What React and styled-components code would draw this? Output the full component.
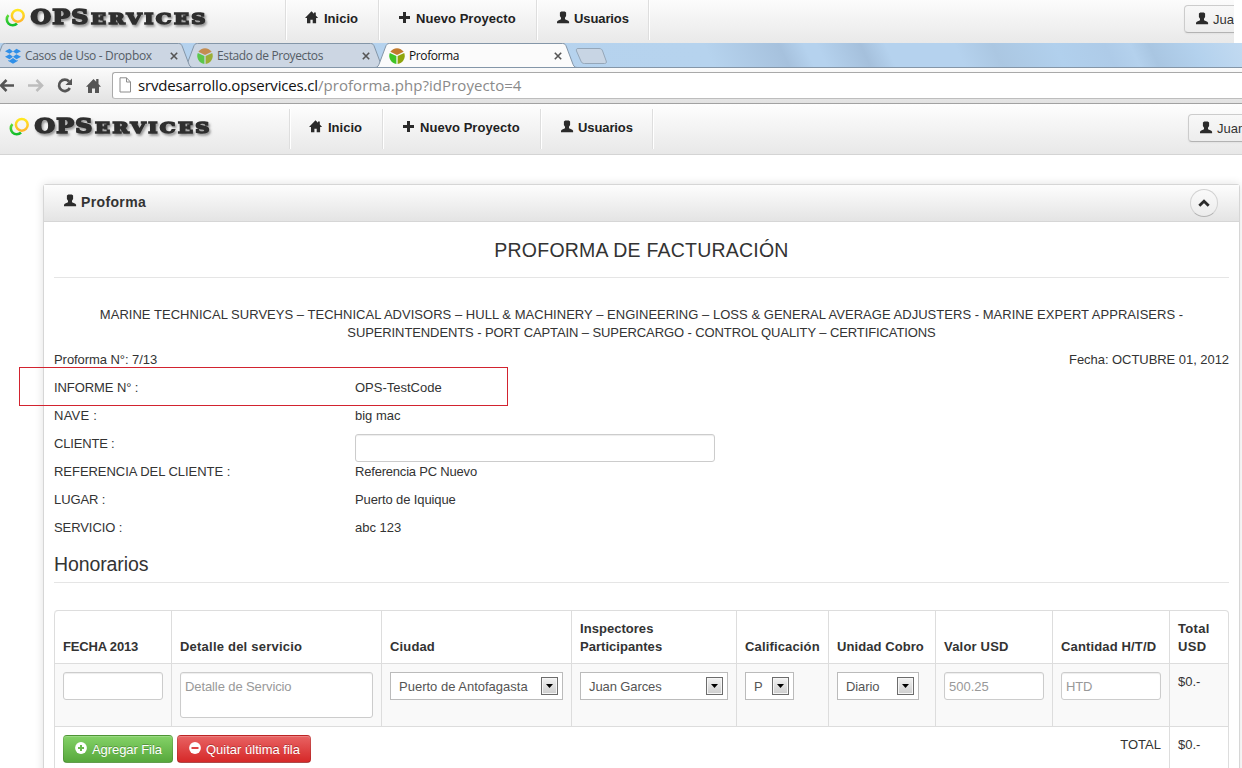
import React from "react";
import styled, { createGlobalStyle, css } from "styled-components";

const GlobalStyle = createGlobalStyle`
  * { box-sizing: border-box; }
  html, body { margin: 0; padding: 0; }
  body {
    width: 1242px;
    height: 768px;
    overflow: hidden;
    background: #fff;
    color: #333;
    font: 13px/18px "Liberation Sans", Arial, sans-serif;
  }
`;

const Page = styled.div`
  width: 1242px;
  height: 768px;
  overflow: hidden;
  display: flex;
  flex-direction: column;
`;

const T = styled.span`
  white-space: nowrap;
  letter-spacing: ${(p) => p.$ls || 0}px;
`;

/* ---------- site navigation bar ---------- */

const CroppedBar = styled.div`
  height: 43px;
  width: 1234px;
  overflow: hidden;
  flex: none;
`;

const Bar = styled.header`
  display: flex;
  align-items: flex-start;
  flex: none;
  width: ${(p) => p.$w}px;
  height: 51px;
  overflow: hidden;
  padding-left: ${(p) => p.$left}px;
  margin-top: ${(p) => p.$top || 0}px;
  background: linear-gradient(#fefefe, #e8e8e8);
  border-bottom: 1px solid #d4d4d4;
`;

const Logo = styled.svg`
  flex: none;
  margin-top: 5px;
  width: 281px;
  height: 40px;
`;

const Nav = styled.nav`
  display: flex;
  height: 40px;
  margin-top: 5px;
  flex: 1;
`;

const NavItem = styled.a`
  display: flex;
  gap: ${(p) => p.$gap || 4}px;
  width: ${(p) => p.$w}px;
  padding: 10px 0 0 19px;
  border-left: 1px solid #dedede;
  box-shadow: inset 1px 0 0 #fff;
  font-weight: bold;
  color: #222;
`;

const UserButton = styled.button`
  display: flex;
  gap: 4px;
  flex: none;
  width: 90px;
  height: 28px;
  margin: 10px -36px 0 0;
  padding: 5px 0 0 10px;
  border: 1px solid #ccc;
  border-bottom-color: #b3b3b3;
  border-radius: 4px;
  background: linear-gradient(#f8f8f8, #ededed);
  box-shadow: 0 1px 2px rgba(0, 0, 0, 0.05);
  color: #333;
  font: 13px/18px "Liberation Sans", Arial, sans-serif;
`;

const Glyph = styled.svg.attrs({ width: 14, height: 14, viewBox: "0 0 14 14" })`
  flex: none;
  margin-top: 1px;
  fill: #2b2b2b;
`;
const HomeIcon = () => (
  <Glyph>
    <path d="M6.500 .3 0 6.900h2V12.300h3.400V8.700h2.300v3.600h3.400V6.900h2L10.800 4.500V1.500H9v1.200z" />
  </Glyph>
);
const PlusIcon = () => (
  <Glyph>
    <path d="M5 1h3v4h4V8H8v4H5V8H1V5h4z" />
  </Glyph>
);
const UserIcon = () => (
  <Glyph>
    <path d="M5.200.4h3.600l1.300 1v3.600L9 6.800v1.500l3.300 1.400.8 1v1.600H1v-1.600l.8-1 3.200-1.400V6.800L3.900 5V1.400z" />
  </Glyph>
);

const Brand = () => (
  <Logo viewBox="0 0 281 40">
    <defs>
      <linearGradient id="ringY" x1="0" y1="0" x2="0" y2="1">
        <stop offset="0" stopColor="#ffe81f" />
        <stop offset="1" stopColor="#ffb62a" />
      </linearGradient>
      <linearGradient id="ringG" x1="0" y1="0" x2="0" y2="1">
        <stop offset="0" stopColor="#5fdc3a" />
        <stop offset="1" stopColor="#14bd2c" />
      </linearGradient>
      <filter id="sh" x="-5%" y="-30%" width="112%" height="180%">
        <feDropShadow dx="1.5" dy="2" stdDeviation="1.3" floodColor="#555" floodOpacity=".6" />
      </filter>
    </defs>
    <path d="M4.500 15.200A5.800 5.800 0 1 0 13 23.500" fill="none" stroke="url(#ringG)" strokeWidth="2.600" />
    <circle cx="13.800" cy="15.800" r="5.900" fill="none" stroke="url(#ringY)" strokeWidth="2.500" />
    <g
      filter="url(#sh)"
      fill="#2e2e2e"
      stroke="#2e2e2e"
      strokeWidth="1.600"
      fontFamily="'DejaVu Serif', serif"
      fontWeight="bold"
    >
      <text x="26.500" y="24.300" fontSize="19.500" textLength="59" lengthAdjust="spacingAndGlyphs" letterSpacing="1">OPS</text>
      <text x="87" y="24.300" fontSize="15.500" textLength="117" lengthAdjust="spacingAndGlyphs" letterSpacing="2">ERVICES</text>
    </g>
  </Logo>
);

const SiteBar = ({ left, top, width }) => (
  <Bar $left={left} $top={top} $w={width}>
    <Brand />
    <Nav>
      <NavItem $w={93} $gap={5}><HomeIcon /><T>Inicio</T></NavItem>
      <NavItem $w={158}><PlusIcon /><T $ls={0.05}>Nuevo Proyecto</T></NavItem>
      <NavItem $w={112}><UserIcon /><T $ls={-0.1}>Usuarios</T></NavItem>
      <NavItem $w={1} />
    </Nav>
    <UserButton><UserIcon /><T>Juan</T></UserButton>
  </Bar>
);

/* ---------- browser chrome ---------- */

const TabStrip = styled.div`
  display: flex;
  flex: none;
  height: 25px;
  overflow: hidden;
  background: linear-gradient(65deg,
    #b4d1ed 0%, #b6d3ee 57%, #a6c1dd 63%, #b5d2ee 65%,
    #b5d2ee 66%, #a5c0dc 69.5%, #b5d2ee 71.5%, #b5d2ee 77%,
    #abc7e2 80%, #b1d0ed 85%, #aecbe8 89%, #b4d1ed 91%,
    #a9c6e2 92.5%, #b3d1ed 96%, #c2daf1 100%);
  border-bottom: 1px solid #8496a8;
`;

const Tab = styled.div`
  display: grid;
  flex: none;
  width: 202px;
  height: 25px;
  margin-left: ${(p) => (p.$first ? -9 : -10)}px;
  z-index: ${(p) => p.$z};
  > * { grid-area: 1 / 1; }
`;

const TabLabel = styled.div`
  display: flex;
  align-items: center;
  padding: 1px 15px 0 14px;
  gap: 4px;
  font: 12px/16px "Open Sans", "Segoe UI", sans-serif;
  color: ${(p) => (p.$active ? "#111" : "#555d66")};
  svg { flex: none; }
  span { flex: 1; }
`;

const TabShape = ({ active }) => (
  <svg width="202" height="25" viewBox="0 0 202 25">
    <path
      d="M0 24.500C3 24.500 3.500 22.500 4.500 20L10.500 4C11.500 1.500 12 .5 14.500 .5H187.500C190 .5 190.500 1.500 191.500 4L197.500 20C198.500 22.500 199 24.500 202 24.500"
      fill={active ? "#fbfbfb" : "#ccd6e3"}
      stroke="#8496a8"
    />
  </svg>
);

const CloseX = () => (
  <svg width="8" height="8" viewBox="0 0 8 8" stroke="#555" strokeWidth="1.600">
    <path d="M.8.800l6.400 6.400M7.200.800L.8 7.200" />
  </svg>
);
const DropboxIcon = () => (
  <svg width="16" height="16" viewBox="0 0 16 16" fill="#2f8fe8">
    <path d="M4.500.8 8 3.400 4.600 5.800 0 3.200zM11.500.8 16 3.200 11.400 5.800 8 3.400zM4.600 6.200 8 8.700 4.500 11.200 0 8.700zM11.400 6.200 16 8.700l-4.500 2.500L8 8.700zM3.300 12l1.200.5L8 9.900l3.500 2.600 1.200-.5v1L8 15.800 3.300 13z" />
  </svg>
);
const CubeIcon = ({ dim }) => (
  <svg width="16" height="16" viewBox="0 0 16 16" opacity={dim ? 0.8 : 1}>
    <path d="M1.300 3.800A8 8 0 0 1 14.700 3.800L8 7z" fill="#c27a2c" />
    <path d="M.8 5A8 8 0 0 0 7.400 15.900V8.100z" fill="#3fc425" />
    <path d="M15.200 5A8 8 0 0 1 8.600 15.900V8.100z" fill="#8fa50c" />
  </svg>
);

const NewTab = styled.svg`
  margin: 5px 0 0 -2px;
  z-index: 1;
`;

const Toolbar = styled.div`
  display: flex;
  flex: none;
  height: 36px;
  background: linear-gradient(#fbfbfb, #e2e2e2);
  border-bottom: 1px solid #a2a2a2;
`;

const ToolIcons = styled.svg`
  flex: none;
  width: 112px;
  height: 35px;
`;

const Omnibox = styled.div`
  display: flex;
  align-items: center;
  flex: 1;
  height: 27px;
  margin-top: 4px;
  padding: 0 0 1px 6px;
  gap: 6px;
  background: #fff;
  border: 1px solid #a9a9a9;
  border-right: 0;
  border-bottom-color: #bdbdbd;
  border-radius: 3px 0 0 3px;
  color: #8a8a8a;
  font: 15px/20px "Open Sans", "Segoe UI", sans-serif;
`;

const Host = styled.b`
  font-weight: normal;
  letter-spacing: -0.17px;
  color: #111;
`;

/* ---------- proforma panel ---------- */

const Main = styled.main`
  flex: none;
  padding: 29px 2px 0 43px;
`;

const Panel = styled.section`
  height: 640px;
  border: 1px solid #d6d6d6;
  border-radius: 3px;
  background: #fff;
  box-shadow: 0 0 10px rgba(0, 0, 0, 0.12);
`;

const PanelHead = styled.div`
  display: flex;
  justify-content: space-between;
  height: 37px;
  padding: 8px 21px 0 19px;
  background: linear-gradient(#fdfdfd, #e4e4e4);
  border-bottom: 1px solid #d6d6d6;
  font: bold 14px/18px "Liberation Sans", Arial, sans-serif;
`;

const PanelTitle = styled.div`
  display: flex;
  gap: 4px;
`;

const Collapse = styled.button`
  display: grid;
  place-items: center;
  width: 28px;
  height: 28px;
  margin-top: -4px;
  padding: 0 1px 0 0;
  border: 1px solid #d2d2d2;
  border-bottom-color: #b3b3b3;
  border-radius: 50%;
  background: linear-gradient(#fafafa, #ececec);
`;

const Body = styled.div`
  padding: 0 10px;
`;

const Heading = styled.h3`
  margin: 0;
  height: ${(p) => p.$h}px;
  padding-top: ${(p) => p.$pt}px;
  border-bottom: 1px solid #e5e5e5;
  font: normal 19.5px/28px "Liberation Sans", Arial, sans-serif;
  text-align: ${(p) => p.$align || "left"};
`;

const Services = styled.div`
  display: flex;
  flex-direction: column;
  align-items: center;
  margin-top: 28px;
`;

const Meta = styled.div`
  display: flex;
  justify-content: space-between;
  margin: 9px 0 4px;
`;

const Field = styled.div`
  display: grid;
  grid-template-columns: 301px 1fr;
  align-items: start;
  height: 28px;
  padding-top: 6px;
  input { margin-top: -1px; }
`;

/* annotation frame laid over the report-number row */
const Highlight = styled.div`
  position: absolute;
  left: -35px;
  top: -6px;
  width: 489px;
  height: 39px;
  border: 1px solid #d2232f;
`;

const Fields = styled.div`
  position: relative;
`;

const inputLook = css`
  display: block;
  border: 1px solid #ccc;
  border-radius: 3px;
  background: #fff;
  box-shadow: inset 0 1px 1px rgba(0, 0, 0, 0.075);
  padding: 4px;
  font: 13px/18px "Liberation Sans", Arial, sans-serif;
  color: #555;
  letter-spacing: ${(p) => p.$ls || 0}px;
  &::placeholder { color: #999; opacity: 1; }
`;

const Input = styled.input`
  ${inputLook}
  width: ${(p) => p.$w}px;
  height: 28px;
`;

const Area = styled.textarea`
  ${inputLook}
  width: 193px;
  height: 46px;
  padding-top: 5px;
  resize: none;
`;

const Select = styled.div`
  display: flex;
  justify-content: space-between;
  align-items: flex-start;
  width: ${(p) => p.$w}px;
  height: 28px;
  padding: 5px 4px 0 8px;
  border: 1px solid #bbb;
  background: #fff;
  color: #555;
`;

const Arrow = styled.span`
  display: grid;
  place-items: center;
  width: 17px;
  height: 18px;
  margin-top: -1px;
  border: 1px solid #6c6c6c;
  box-shadow: inset 0 0 0 1px #f6f6f6;
  background: linear-gradient(#f2f2f2, #cdcdcd);
`;

const Pick = ({ w, ls, children }) => (
  <Select $w={w}>
    <T $ls={ls}>{children}</T>
    <Arrow>
      <svg width="7" height="4" viewBox="0 0 7 4"><path d="M0 0h7L3.500 4z" /></svg>
    </Arrow>
  </Select>
);

const Table = styled.table`
  width: 1175px;
  margin-top: 27px;
  table-layout: fixed;
  border-collapse: separate;
  border-spacing: 0;
  border: 1px solid #ddd;
  border-left: 0;
  border-radius: 4px;
  th, td {
    padding: 8px;
    border-left: 1px solid #ddd;
    text-align: left;
    vertical-align: top;
  }
  th { vertical-align: bottom; height: 52px; padding-bottom: 7px; }
  td { border-top: 1px solid #ddd; }
  tbody td { background: #f9f9f9; height: 63px; }
  thead th:first-child { border-top-left-radius: 4px; }
`;

const Col = styled.col`
  width: ${(p) => p.$w}px;
`;

const HeadCell = styled.th`
  letter-spacing: ${(p) => p.$ls}px;
`;

const Amount = styled.div`
  padding-top: 1px;
`;

const Total = styled.div`
  display: flex;
  justify-content: space-between;
`;

const Actions = styled.div`
  display: flex;
  gap: 4px;
`;

const Button = styled.button`
  display: flex;
  gap: 4px;
  width: ${(p) => p.$w}px;
  height: 28px;
  padding: 5px 0 0 10px;
  border: 1px solid rgba(0, 0, 0, 0.12);
  border-bottom-color: rgba(0, 0, 0, 0.25);
  border-radius: 4px;
  background: ${(p) => (p.$red ? "linear-gradient(#e86363, #d62828)" : "linear-gradient(#84d267, #57a83c)")};
  box-shadow: inset 0 1px 0 rgba(255, 255, 255, 0.2);
  color: #fff;
  text-shadow: 0 -1px 0 rgba(0, 0, 0, 0.25);
  font: 13px/18px "Liberation Sans", Arial, sans-serif;
  svg { flex: none; }
`;

const SignIcon = ({ plus }) => (
  <svg width="14" height="14" viewBox="0 0 14 14">
    <circle cx="7" cy="7" r="5.900" fill="#fff" />
    <path d={plus ? "M7 4v6M4 7h6" : "M3.500 7h7"} stroke={plus ? "#69b94d" : "#dc4444"} strokeWidth="2" />
  </svg>
);

const columns = [
  [117, "FECHA 2013", -0.18],
  [210, "Detalle del servicio", 0.22],
  [190, "Ciudad", 0.15],
  [165, "Inspectores Participantes", 0.04],
  [92, "Calificación", 0.15],
  [107, "Unidad Cobro", 0.08],
  [117, "Valor USD", 0.2],
  [117, "Cantidad H/T/D", 0.15],
  [59, "Total USD", 0.3],
];

export default function App() {
  return (
    <Page>
      <GlobalStyle />
      <CroppedBar>
        <SiteBar left={4} top={-5} width={1238} />
      </CroppedBar>

      <TabStrip>
        <Tab $first $z={2}>
          <TabShape />
          <TabLabel><DropboxIcon /><T $ls={-0.33}>Casos de Uso - Dropbox</T><CloseX /></TabLabel>
        </Tab>
        <Tab $z={1}>
          <TabShape />
          <TabLabel><CubeIcon dim /><T $ls={-0.38}>Estado de Proyectos</T><CloseX /></TabLabel>
        </Tab>
        <Tab $z={3}>
          <TabShape active />
          <TabLabel $active><CubeIcon /><T $ls={-0.4}>Proforma</T><CloseX /></TabLabel>
        </Tab>
        <NewTab width="34" height="17" viewBox="0 0 34 17">
          <path d="M3 .5h21c2 0 3 .8 3.600 2.500l3.600 10c.5 1.500 0 2.500-1.700 2.500H9.500c-2 0-3-.8-3.600-2.500L1.500 3C1 1.500 1.500.5 3 .5z" fill="#c8d5e4" stroke="#95a7b9" />
        </NewTab>
      </TabStrip>
      <Toolbar>
        <ToolIcons viewBox="0 0 112 35" fill="none">
          <path d="M14 17.500H1M6.500 12 1 17.500 6.500 23" stroke="#555" strokeWidth="2.600" />
          <path d="M28 17.500h14M36.500 12l5.500 5.500-5.500 5.500" stroke="#bdbdbd" strokeWidth="2.600" />
          <path d="M69 13.500A5.700 5.700 0 1 0 69.800 20" stroke="#555" strokeWidth="2.700" />
          <path d="M72 10.500V17h-6.500z" fill="#555" />
          <path d="M93.500 11 86 18.700h2V25h4v-4.500h3V25h4v-6.300h2L98.500 16v-5h-2.300v2.700z" fill="#555" />
        </ToolIcons>
        <Omnibox>
          <svg width="13" height="16" viewBox="0 0 13 16" fill="#fff" stroke="#8c8c8c">
            <path d="M1 .8h6.500L11.500 5v10H1zM7.500.8V5h4" />
          </svg>
          <T $ls={0.06}><Host>srvdesarrollo.opservices.cl</Host>/proforma.php?idProyecto=4</T>
        </Omnibox>
      </Toolbar>

      <SiteBar left={8} width={1242} />

      <Main>
        <Panel>
          <PanelHead>
            <PanelTitle><UserIcon /><T $ls={0.36}>Proforma</T></PanelTitle>
            <Collapse>
              <svg width="12" height="8" viewBox="0 0 12 8" fill="none" stroke="#2b2b2b" strokeWidth="2.800">
                <path d="M1.300 6.800 6 2.200l4.700 4.600" />
              </svg>
            </Collapse>
          </PanelHead>
          <Body>
            <Heading $h={56} $pt={14} $align="center"><T $ls={0.22}>PROFORMA DE FACTURACIÓN</T></Heading>
            <Services>
              <T $ls={0.03}>MARINE TECHNICAL SURVEYS – TECHNICAL ADVISORS – HULL &amp; MACHINERY – ENGINEERING – LOSS &amp; GENERAL AVERAGE ADJUSTERS - MARINE EXPERT APPRAISERS -</T>
              <T $ls={-0.1}>SUPERINTENDENTS - PORT CAPTAIN – SUPERCARGO - CONTROL QUALITY – CERTIFICATIONS</T>
            </Services>
            <Meta>
              <T $ls={-0.06}>Proforma N°: 7/13</T>
              <T $ls={-0.05}>Fecha: OCTUBRE 01, 2012</T>
            </Meta>
            <Fields>
              <Field><T $ls={-0.08}>INFORME N° :</T><T>OPS-TestCode</T></Field>
              <Field><T $ls={0.25}>NAVE :</T><T>big mac</T></Field>
              <Field><T $ls={-0.18}>CLIENTE :</T><Input $w={360} /></Field>
              <Field><T $ls={-0.04}>REFERENCIA DEL CLIENTE :</T><T $ls={-0.2}>Referencia PC Nuevo</T></Field>
              <Field><T $ls={-0.1}>LUGAR :</T><T $ls={-0.12}>Puerto de Iquique</T></Field>
              <Field><T $ls={-0.08}>SERVICIO :</T><T>abc 123</T></Field>
              <Highlight />
            </Fields>
            <Heading $h={42} $pt={9}><T $ls={-0.1}>Honorarios</T></Heading>
            <Table>
              <colgroup>
                {columns.map(([w, label]) => <Col key={label} $w={w} />)}
              </colgroup>
              <thead>
                <tr>{columns.map(([, label, ls]) => <HeadCell key={label} $ls={ls}>{label}</HeadCell>)}</tr>
              </thead>
              <tbody>
                <tr>
                  <td><Input $w={100} /></td>
                  <td><Area $ls={-0.1} placeholder="Detalle de Servicio" /></td>
                  <td><Pick w={173}>Puerto de Antofagasta</Pick></td>
                  <td><Pick w={148} ls={-0.1}>Juan Garces</Pick></td>
                  <td><Pick w={49}>P</Pick></td>
                  <td><Pick w={82} ls={-0.1}>Diario</Pick></td>
                  <td><Input $w={100} placeholder="500.25" /></td>
                  <td><Input $w={100} $ls={-0.2} placeholder="HTD" /></td>
                  <td><Amount>$0.-</Amount></td>
                </tr>
              </tbody>
              <tfoot>
                <tr>
                  <td colSpan={8}>
                    <Total>
                      <Actions>
                        <Button $w={110}><SignIcon plus /><T $ls={-0.08}>Agregar Fila</T></Button>
                        <Button $w={134} $red><SignIcon /><T>Quitar última fila</T></Button>
                      </Actions>
                      <Amount>TOTAL</Amount>
                    </Total>
                  </td>
                  <td><Amount>$0.-</Amount></td>
                </tr>
              </tfoot>
            </Table>
          </Body>
        </Panel>
      </Main>
    </Page>
  );
}
